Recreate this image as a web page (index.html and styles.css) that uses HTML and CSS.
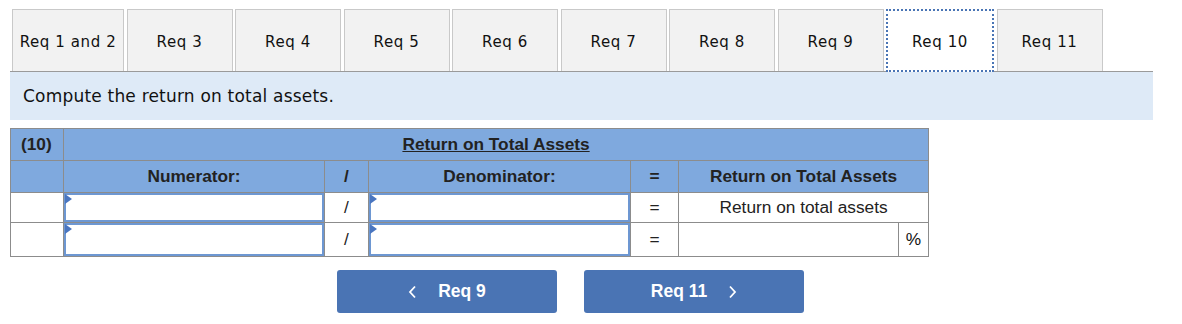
FILE: index.html
```html
<!DOCTYPE html>
<html lang="en">
<head>
    <meta charset="UTF-8">
    <title>Req 10</title>
    <link rel="stylesheet" href="styles.css">
</head>
<body>
    <div class="page">
        <div class="tabs">
            <div class="tab first">Req 1 and 2</div>
            <div class="tab">Req 3</div>
            <div class="tab">Req 4</div>
            <div class="tab">Req 5</div>
            <div class="tab">Req 6</div>
            <div class="tab">Req 7</div>
            <div class="tab">Req 8</div>
            <div class="tab">Req 9</div>
            <div class="tab active">Req 10</div>
            <div class="tab">Req 11</div>
        </div>

        <div class="instructions">Compute the return on total assets.</div>

        <table class="ratio">
            <colgroup>
                <col class="c-label">
                <col class="c-num">
                <col class="c-op">
                <col class="c-den">
                <col class="c-eq">
                <col class="c-res">
                <col class="c-pct">
            </colgroup>
            <tr class="head title-row">
                <th class="left">(10)</th>
                <th colspan="6"><span class="title">Return on Total Assets</span></th>
            </tr>
            <tr class="head">
                <th></th>
                <th>Numerator:</th>
                <th>/</th>
                <th>Denominator:</th>
                <th>=</th>
                <th colspan="2">Return on Total Assets</th>
            </tr>
            <tr class="r3">
                <td></td>
                <td class="input-cell"><div class="field"></div></td>
                <td class="op">/</td>
                <td class="input-cell"><div class="field"></div></td>
                <td class="op">=</td>
                <td colspan="2" class="result">Return on total assets</td>
            </tr>
            <tr class="r4">
                <td></td>
                <td class="input-cell"><div class="field"></div></td>
                <td class="op">/</td>
                <td class="input-cell"><div class="field"></div></td>
                <td class="op">=</td>
                <td></td>
                <td class="pct">%</td>
            </tr>
        </table>

        <div class="nav">
            <button class="nav-btn">
                <svg class="chev" width="9" height="14" viewBox="0 0 9 14"><polyline points="7,1.5 2,7 7,12.5" fill="none" stroke="#fff" stroke-width="1.8"/></svg>
                Req 9
            </button>
            <button class="nav-btn">
                Req 11
                <svg class="chev" width="9" height="14" viewBox="0 0 9 14"><polyline points="2,1.5 7,7 2,12.5" fill="none" stroke="#fff" stroke-width="1.8"/></svg>
            </button>
        </div>
    </div>
</body>
</html>
```

FILE: styles.css
```css
body {
    margin: 0;
    font-family: "DejaVu Sans", Verdana, sans-serif;
    background: #fff;
    color: #111;
}
.page {
    padding: 9px 0 0 10px;
    width: 1143px;
}
.tabs {
    display: flex;
    gap: 2.5px;
    padding-left: 2px;
    border-bottom: 1px solid #9a9a9a;
}
.tab {
    width: 106px;
    height: 62px;
    box-sizing: border-box;
    border: 1px solid #c9c9c9;
    border-bottom: none;
    background: #f2f2f2;
    font-size: 15px;
    letter-spacing: 0.6px;
    display: flex;
    align-items: center;
    justify-content: center;
    padding-top: 2px;
}
.tab.first {
    width: 112px;
}
.tab.active {
    background: #fff;
    border: 2px dotted #4a75b5;
    height: 63px;
    margin-bottom: -1px;
    width: 108px;
}
.instructions {
    background: #deeaf7;
    height: 48px;
    box-sizing: border-box;
    padding: 14px 0 0 13px;
    font-size: 17px;
    letter-spacing: 0.2px;
}
.ratio {
    margin-top: 8px;
    border-collapse: collapse;
    font-family: "Liberation Sans", Arial, sans-serif;
    font-size: 17.3px;
    table-layout: fixed;
    width: 918px;
}
.c-label { width: 53px; }
.c-num { width: 261px; }
.c-op { width: 44px; }
.c-den { width: 262px; }
.c-eq { width: 48px; }
.c-res { width: 220px; }
.c-pct { width: 30px; }
.ratio th,
.ratio td {
    border: 1px solid #8c8c8c;
    padding: 0;
    text-align: center;
}
.head th {
    background: #7fa9de;
    color: #222;
    font-weight: bold;
}
.title-row {
    height: 33px;
}
.title-row .left {
    text-align: left;
    padding-left: 10px;
}
.title {
    text-decoration: underline;
}
.head {
    height: 32px;
}
.r3 {
    height: 30px;
}
.r4 {
    height: 34px;
}
.op,
.result {
    color: #222;
}
.input-cell {
    padding: 0;
}
.field {
    position: relative;
    border: 2px solid #6d97d2;
    background: #fff;
    box-sizing: border-box;
}
.r3 .field { height: 29px; }
.r4 .field { height: 33px; }
.field::before {
    content: "";
    position: absolute;
    left: -1px;
    top: -1px;
    border-top: 5px solid transparent;
    border-bottom: 5px solid transparent;
    border-left: 7px solid #4a76c0;
}
.nav {
    display: flex;
    gap: 27px;
    padding-left: 327px;
    margin-top: 13px;
}
.nav-btn {
    width: 220px;
    height: 43px;
    background: #4a74b4;
    color: #fff;
    border: none;
    border-radius: 3px;
    font-family: "Liberation Sans", Arial, sans-serif;
    font-weight: bold;
    font-size: 17.5px;
    display: flex;
    align-items: center;
    justify-content: center;
    gap: 21px;
}
```
